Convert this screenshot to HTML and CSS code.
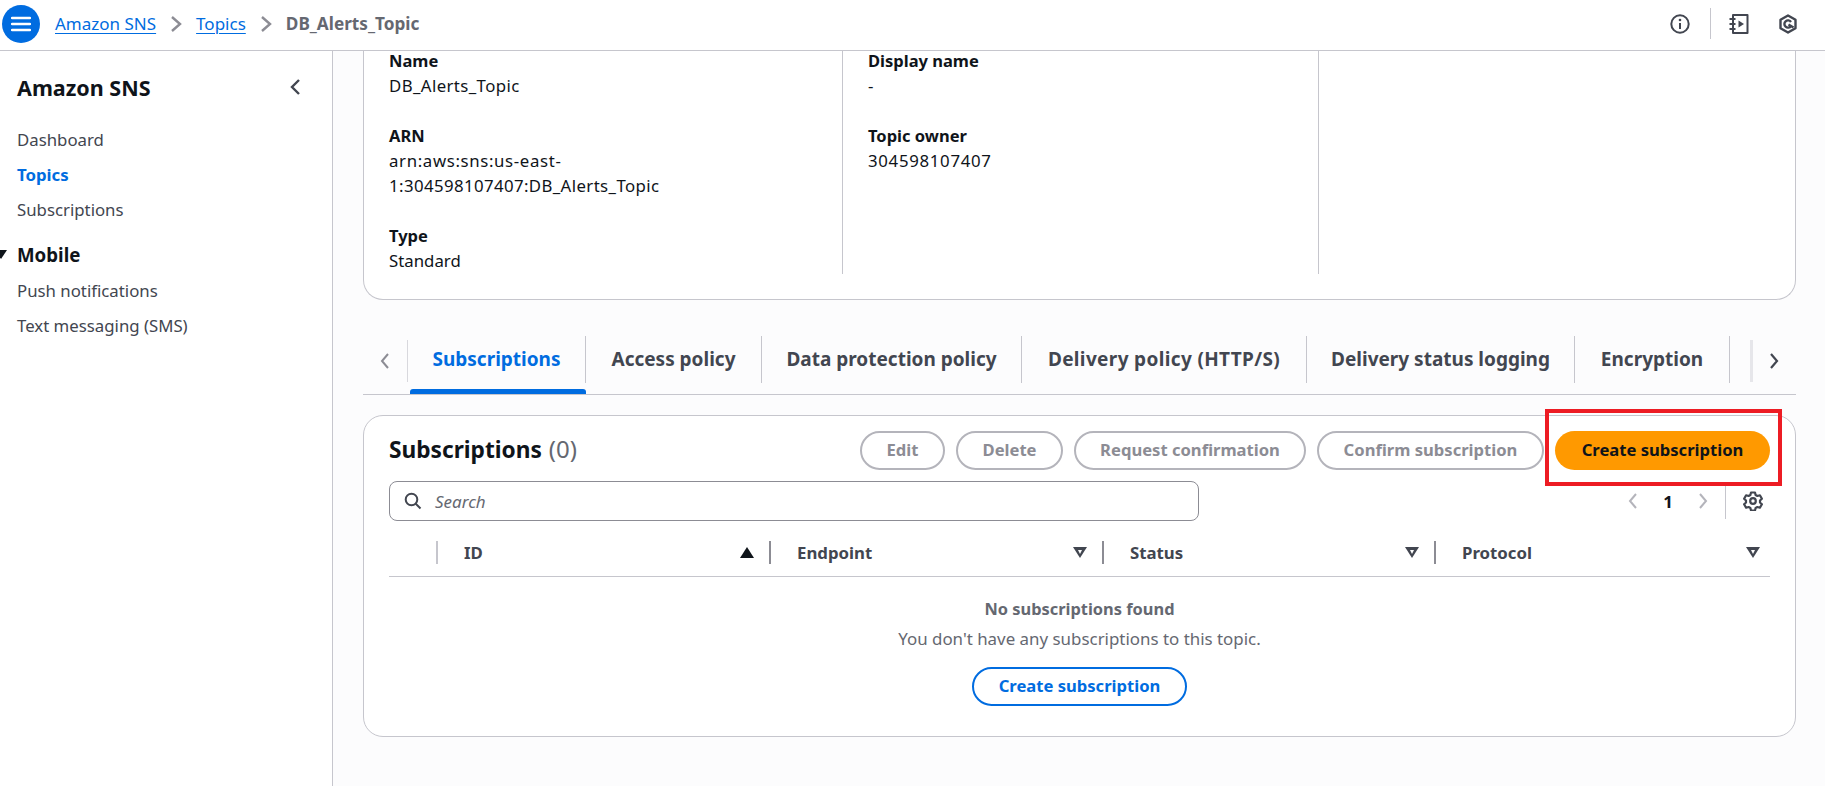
FILE: index.html
```html
<!DOCTYPE html>
<html>
<head>
  <meta charset="utf-8">
  <title>DB_Alerts_Topic | Amazon SNS</title>
  <link rel="stylesheet" href="styles.css">
</head>
<body>
  <header class="topbar">
    <button class="menu-btn">
      <svg width="20" height="16" viewBox="0 0 20 16"><path d="M1 2h18M1 8h18M1 14h18" stroke="#fff" stroke-width="2.4" stroke-linecap="round"/></svg>
    </button>
    <nav class="crumbs">
      <a class="crumb-link">Amazon SNS</a>
      <svg class="crumb-sep" width="12" height="18" viewBox="0 0 12 18"><path d="M2 2l8 7-8 7" fill="none" stroke="#8c8c94" stroke-width="2.400"/></svg>
      <a class="crumb-link">Topics</a>
      <svg class="crumb-sep" width="12" height="18" viewBox="0 0 12 18"><path d="M2 2l8 7-8 7" fill="none" stroke="#8c8c94" stroke-width="2.400"/></svg>
      <span class="crumb-current">DB_Alerts_Topic</span>
    </nav>
    <div class="top-icons">
      <svg class="icon-info" width="20" height="20" viewBox="0 0 20 20"><circle cx="10" cy="10" r="8.7" fill="none" stroke="#424650" stroke-width="2"/><path d="M10 9v6" stroke="#424650" stroke-width="2"/><circle cx="10" cy="6" r="1.3" fill="#424650"/></svg>
      <span class="top-divider"></span>
      <svg class="icon-book" width="20" height="20" viewBox="0 0 20 20"><path d="M4 1h14.500v18H4z" fill="none" stroke="#424650" stroke-width="2" stroke-linejoin="round"/><path d="M0.500 5h6M0.500 10h6M0.500 15h6" stroke="#424650" stroke-width="2"/><path d="M9.500 6.500l5.500 3.500-5.500 3.500z" fill="#424650"/></svg>
      <svg class="icon-hex" width="20" height="20" viewBox="0 0 20 20"><path d="M10 1.500l7.500 4.300v8.400L10 18.500l-7.500-4.300V5.800z" fill="none" stroke="#424650" stroke-width="2.400" stroke-linejoin="round"/><path d="M13 8A3.600 3.600 0 1 0 13 12" fill="none" stroke="#424650" stroke-width="2.400"/><path d="M10.500 10.500l5 3" stroke="#424650" stroke-width="2.400"/></svg>
    </div>
  </header>

  <div class="layout">
    <aside class="sidebar">
      <div class="side-head">
        <h2 class="side-title">Amazon SNS</h2>
        <svg width="12" height="18" viewBox="0 0 12 18"><path d="M10 2L3 9l7 7" fill="none" stroke="#424650" stroke-width="2.400"/></svg>
      </div>
      <ul class="side-list">
        <li>Dashboard</li>
        <li class="side-active">Topics</li>
        <li>Subscriptions</li>
      </ul>
      <div class="side-group"><span class="side-caret"></span>Mobile</div>
      <ul class="side-list">
        <li>Push notifications</li>
        <li>Text messaging (SMS)</li>
      </ul>
    </aside>

    <main class="content">
      <section class="details">
        <div class="details-grid">
          <div class="details-col">
            <div class="field"><div class="field-label">Name</div><div class="value-id">DB_Alerts_Topic</div></div>
            <div class="field"><div class="field-label">ARN</div><div class="value-arn">arn:aws:sns:us-east-<br><span class="value-id">1:304598107407:DB_Alerts_Topic</span></div></div>
            <div class="field"><div class="field-label">Type</div><div>Standard</div></div>
          </div>
          <div class="details-col">
            <div class="field"><div class="field-label">Display name</div><div>-</div></div>
            <div class="field"><div class="field-label">Topic owner</div><div class="value-num">304598107407</div></div>
          </div>
          <div></div>
        </div>
      </section>

      <div class="tabs">
        <div class="tab-arrow tab-prev">
          <svg width="12" height="18" viewBox="0 0 12 18"><path d="M9 2L3 9l6 7" fill="none" stroke="#8c8c94" stroke-width="2"/></svg>
        </div>
        <div class="tab active"><span class="tab-label">Subscriptions</span></div>
        <div class="tab"><span class="tab-label">Access policy</span></div>
        <div class="tab"><span class="tab-label">Data protection policy</span></div>
        <div class="tab"><span class="tab-label tab-wide">Delivery policy (HTTP/S)</span></div>
        <div class="tab"><span class="tab-label">Delivery status logging</span></div>
        <div class="tab"><span class="tab-label">Encryption</span></div>
        <div class="tab-arrow tab-next">
          <svg width="12" height="18" viewBox="0 0 12 18"><path d="M3 2l6 7-6 7" fill="none" stroke="#424650" stroke-width="2.200"/></svg>
        </div>
      </div>

      <section class="subs">
        <div class="highlight"></div>
        <div class="subs-head">
          <h2 class="subs-title">Subscriptions <span class="subs-count">(0)</span></h2>
          <div class="actions">
            <button class="btn btn-edit">Edit</button>
            <button class="btn btn-delete">Delete</button>
            <button class="btn btn-request">Request confirmation</button>
            <button class="btn btn-confirm">Confirm subscription</button>
            <button class="btn btn-primary">Create subscription</button>
          </div>
        </div>

        <div class="filter-row">
          <div class="search">
            <svg width="18" height="18" viewBox="0 0 18 18"><circle cx="7.500" cy="7.500" r="5.800" fill="none" stroke="#424650" stroke-width="2"/><path d="M11.500 11.500l5 5" stroke="#424650" stroke-width="2"/></svg>
            <span class="search-text">Search</span>
          </div>
          <div class="pager">
            <svg width="12" height="18" viewBox="0 0 12 18"><path d="M9 2L3 9l6 7" fill="none" stroke="#b4b4bb" stroke-width="2"/></svg>
            <span class="pager-num">1</span>
            <svg width="12" height="18" viewBox="0 0 12 18"><path d="M3 2l6 7-6 7" fill="none" stroke="#b4b4bb" stroke-width="2"/></svg>
            <span class="pager-divider"></span>
            <svg width="20" height="20" viewBox="0 0 20 20"><path d="M8 1.500h4l.6 2.500 1.800 1 2.500-.7 2 3.400-1.900 1.800v2l1.900 1.800-2 3.400-2.500-.7-1.800 1-.6 2.500H8l-.6-2.500-1.800-1-2.500.7-2-3.400 1.900-1.800v-2L1.100 7.700l2-3.400 2.500.7 1.800-1z" fill="none" stroke="#424650" stroke-width="2.200" stroke-linejoin="round"/><circle cx="10" cy="10" r="2.800" fill="none" stroke="#424650" stroke-width="2.200"/></svg>
          </div>
        </div>

        <div class="table-head">
          <div class="col-blank"></div>
          <div class="col"><span>ID</span><span class="sort-on"></span></div>
          <div class="col"><span>Endpoint</span><span class="sort"></span></div>
          <div class="col"><span>Status</span><span class="sort"></span></div>
          <div class="col col-last"><span>Protocol</span><span class="sort"></span></div>
        </div>

        <div class="empty">
          <div class="empty-title">No subscriptions found</div>
          <div class="empty-text">You don't have any subscriptions to this topic.</div>
          <button class="btn btn-outline">Create subscription</button>
        </div>
      </section>
    </main>
  </div>
</body>
</html>
```

FILE: styles.css
```css
* {
    box-sizing: border-box;
}

html, body {
    margin: 0;
    height: 786px;
    overflow: hidden;
}

body {
    font-family: "Noto Sans", sans-serif;
    font-size: 16.800px;
    color: #0f141a;
    background-color: #fcfcfd;
}

/* top bar */
.topbar {
    display: flex;
    align-items: center;
    height: 51px;
    padding: 0 27px 3px 2px;
    background-color: white;
    border-bottom: 1px solid #c6c6cd;
}

.menu-btn {
    display: flex;
    align-items: center;
    justify-content: center;
    width: 38px;
    height: 38px;
    padding: 0;
    border: none;
    border-radius: 50%;
    background-color: #006ce0;
}

.crumbs {
    display: flex;
    align-items: center;
    margin-left: 15px;
    font-size: 17px;
}

.crumb-link {
    color: #006ce0;
    line-height: 22px;
    text-decoration: underline;
    text-underline-offset: 3px;
    text-decoration-thickness: 1px;
}

.crumb-sep {
    margin: 0 14px;
}

.crumb-current {
    color: #656871;
    font-weight: 700;
    font-size: 17.200px;
}

.top-icons {
    display: flex;
    align-items: center;
    margin-left: auto;
}

.top-divider {
    width: 1px;
    height: 31px;
    margin: 0 18px 0 20px;
    background-color: #c6c6cd;
}

.icon-hex {
    margin-left: 29px;
}

/* page */
.layout {
    display: flex;
    height: 735px;
}

.sidebar {
    flex: 0 0 333px;
    padding: 21px 0 0 17px;
    background-color: white;
    border-right: 1px solid #c6c6cd;
}

.side-head {
    display: flex;
    align-items: center;
    justify-content: space-between;
    padding-right: 31px;
    height: 30px;
}

.side-title {
    margin: 0;
    font-size: 21.500px;
    font-weight: 700;
}

.side-list {
    margin: 0;
    padding: 0;
    list-style: none;
    color: #424650;
}

.side-list li {
    height: 35px;
    line-height: 35px;
}

.side-head + .side-list {
    margin-top: 20px;
}

.side-active {
    color: #006ce0;
    font-weight: 700;
}

.side-group {
    position: relative;
    height: 36px;
    margin-top: 10px;
    line-height: 35px;
    font-size: 18.700px;
    font-weight: 700;
}

.side-caret {
    position: absolute;
    left: -22px;
    top: 13px;
    width: 0;
    height: 0;
    border-left: 6px solid transparent;
    border-right: 6px solid transparent;
    border-top: 9px solid #0f141a;
}

.content {
    flex: 1;
    padding: 0 29px 0 30px;
}

/* details card, scrolled so its top edge is hidden */
.details {
    height: 249px;
    background-color: white;
    border: 1px solid #c6c6cd;
    border-top: none;
    border-radius: 0 0 20px 20px;
}

.details-grid {
    display: grid;
    grid-template-columns: 479px 476px 1fr;
    line-height: 25px;
}

.details-col {
    padding-left: 25px;
    height: 223px;
    border-right: 1px solid #c6c6cd;
}

.field {
    margin-bottom: 25px;
}

.field-label {
    font-size: 16.500px;
    font-weight: 700;
}

.field:first-child .field-label {
    line-height: 19px;
    margin-bottom: 3px;
}

.value-id {
    letter-spacing: 0.400px;
}

.value-arn {
    letter-spacing: 0.650px;
}

.value-num {
    letter-spacing: 0.700px;
}

/* tabs */
.tabs {
    display: grid;
    grid-template-columns: 45px 178px 176px 260px 285px 268px 155px 1fr;
    margin-top: 36px;
    height: 59px;
    border-bottom: 1px solid #c6c6cd;
}

.tab-arrow {
    display: flex;
    align-items: center;
    justify-content: center;
    height: 42px;
    margin-top: 4px;
}

.tab-prev {
    border-right: 1px solid #d8d8dd;
}

.tab-next {
    justify-content: flex-end;
    margin-left: 20px;
    padding-right: 16px;
    border-left: 3px solid #e6e6ea;
}

.tab-label {
    display: block;
    height: 47px;
    line-height: 46px;
    text-align: center;
    font-size: 19px;
    font-weight: 700;
    color: #424650;
    border-right: 1px solid #c6c6cd;
    white-space: nowrap;
}

.tab-wide {
    letter-spacing: 0.350px;
}

.active .tab-label {
    color: #006ce0;
}

.active::after {
    content: "";
    display: block;
    height: 5px;
    margin: 6px 0 0 2px;
    border-radius: 3px 3px 0 0;
    background-color: #006ce0;
}

/* subscriptions card */
.subs {
    position: relative;
    height: 322px;
    margin-top: 20px;
    padding: 15px 25px 0;
    background-color: white;
    border: 1px solid #c6c6cd;
    border-radius: 20px;
}

.highlight {
    position: absolute;
    top: -7px;
    right: 13px;
    width: 237px;
    height: 77px;
    border: 4px solid #ed1c24;
}

.subs-head {
    display: flex;
    align-items: center;
    justify-content: space-between;
}

.subs-title {
    margin: 0 0 3px;
    font-size: 22.700px;
    line-height: 32px;
    font-weight: 700;
}

.subs-count {
    margin-left: 1px;
    font-size: 24px;
    color: #656871;
    font-weight: 400;
}

.actions {
    display: flex;
    gap: 11px;
}

.btn {
    height: 39px;
    padding: 0 0 2px;
    font-family: "Noto Sans", sans-serif;
    font-size: 16.600px;
    font-weight: 700;
    border-radius: 20px;
    background-color: white;
}

.btn-edit,
.btn-delete,
.btn-request,
.btn-confirm {
    color: #8c8c94;
    border: 2px solid #b4b4bb;
}

.btn-edit { width: 85px; }
.btn-delete { width: 107px; }
.btn-request { width: 232px; }
.btn-confirm { width: 227px; }

.btn-primary {
    width: 215px;
    color: #0f141a;
    border: none;
    background-color: #ff9900;
}

.filter-row {
    display: flex;
    justify-content: space-between;
    margin-top: 11px;
}

.search {
    display: flex;
    align-items: center;
    gap: 13px;
    width: 810px;
    height: 40px;
    padding-left: 14px;
    border: 1px solid #8c8c94;
    border-radius: 8px;
}

.search-text {
    font-size: 17px;
    font-style: italic;
    color: #656871;
}

.pager {
    display: flex;
    align-items: center;
    height: 40px;
    padding-right: 7px;
}

.pager-num {
    width: 58px;
    text-align: center;
    font-weight: 700;
}

.pager-divider {
    width: 1px;
    height: 36px;
    margin: 0 17px 0 16px;
    background-color: #c6c6cd;
}

/* table */
.table-head {
    display: grid;
    grid-template-columns: 49px 333px 333px 332px 1fr;
    align-items: center;
    height: 48px;
    margin-top: 8px;
    border-bottom: 1px solid #c6c6cd;
}

.col-blank {
    height: 23px;
    border-right: 2px solid #c6c6cd;
}

.col {
    display: flex;
    align-items: center;
    justify-content: space-between;
    height: 23px;
    padding: 0 15px 0 26px;
    font-size: 16.800px;
    font-weight: 700;
    color: #424650;
    border-right: 2px solid #8c8c94;
}

.col-last {
    border-right: none;
    padding-right: 10px;
}

.sort, .sort-on {
    width: 0;
    height: 0;
    border-left: 7px solid transparent;
    border-right: 7px solid transparent;
    border-top: 11px solid #424650;
    position: relative;
}

.sort-on {
    border-top: none;
    border-bottom: 11px solid #0f141a;
}

.sort::after {
    content: "";
    position: absolute;
    left: -2.500px;
    top: -8.500px;
    border-left: 2.500px solid transparent;
    border-right: 2.500px solid transparent;
    border-top: 4px solid white;
}

.empty {
    display: flex;
    flex-direction: column;
    align-items: center;
    padding-top: 20px;
    color: #656871;
}

.empty-title {
    font-size: 16.400px;
    font-weight: 700;
    line-height: 24px;
}

.empty-text {
    margin-top: 6px;
    font-size: 16.900px;
    line-height: 24px;
}

.btn-outline {
    width: 215px;
    margin-top: 16px;
    color: #006ce0;
    border: 2px solid #006ce0;
}
```
